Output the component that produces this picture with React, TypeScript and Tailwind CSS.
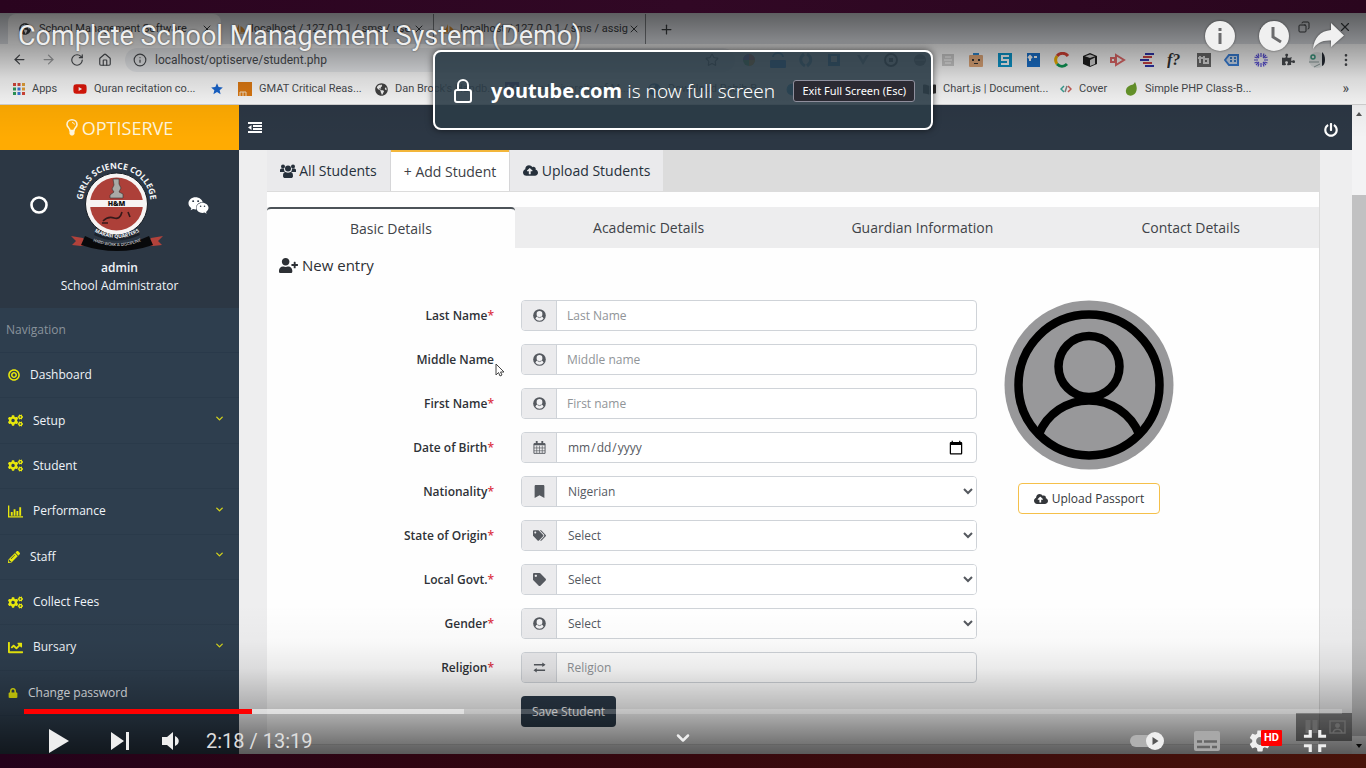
import React from "react";
import {
  FaBookmark,
  FaBookOpen,
  FaBullseye,
  FaChartLine,
  FaCloudUploadAlt,
  FaCogs,
  FaGlobeAmericas,
  FaLock,
  FaPencilAlt,
  FaPowerOff,
  FaPuzzlePiece,
  FaTag,
  FaTags,
  FaUserPlus,
  FaWeixin,
  FaYoutube,
} from "react-icons/fa";
import { MdFullscreenExit, MdSettings, MdStar } from "react-icons/md";
import {
  ArrowLeft,
  ArrowRight,
  ChevronDown,
  Circle,
  Copy,
  EllipsisVertical,
  House,
  Info,
  Minus,
  Plus,
  RotateCw,
  Star,
  X,
} from "lucide-react";

const browserFont = "font-[Roboto,'Open_Sans',sans-serif]";
const pageFont = "font-['Open_Sans','Noto_Sans',sans-serif]";

/* ---------- Browser chrome ---------- */

function Sails() {
  return (
    <svg viewBox="0 0 14 12" className="h-3 w-3.5 shrink-0" aria-hidden="true">
      <path d="M6 1v8H1C3 7 5 4 6 1zM7.500 3c2 1 4 3 5 6h-5z" fill="#d99032" />
      <path d="M1 10h12" stroke="#c98a35" />
    </svg>
  );
}

function TabStrip() {
  return (
    <div className="flex h-[31px] shrink-0 items-end bg-[#dee1e6] pl-2 text-[11px] text-[#3c4043]">
      <div className="flex h-[30px] w-[213px] items-center rounded-t-lg bg-white pl-[11px] pr-2">
        <FaGlobeAmericas className="mr-2 size-3 shrink-0" />
        <span className="flex-1 whitespace-nowrap">School Management Software</span>
        <button aria-label="Close tab"><X size={12} /></button>
      </div>
      <div className="flex h-[30px] w-[213px] items-center border-r border-[#7d8084] pl-3 pr-2">
        <Sails />
        <span className="ml-1 flex-1 whitespace-nowrap">localhost / 127.0.0.1 / sms / use</span>
        <button aria-label="Close tab"><X size={12} /></button>
      </div>
      <div className="flex h-[30px] w-[212px] items-center border-r border-[#7d8084] pl-2 pr-2">
        <Sails />
        <span className="ml-1 flex-1 whitespace-nowrap">localhost / 127.0.0.1 / sms / assig</span>
        <button aria-label="Close tab"><X size={12} /></button>
      </div>
      <button aria-label="New tab" className="flex h-[30px] w-10 items-center justify-center"><Plus size={15} /></button>
      <div className="ml-auto flex h-[30px] items-center gap-7 pr-3.5">
        <button aria-label="Minimize"><Minus size={12} /></button>
        <button aria-label="Restore" className="pb-1"><Copy size={12} className="-scale-x-100" /></button>
        <button aria-label="Close window" className="pb-1"><X size={14} /></button>
      </div>
    </div>
  );
}

const extensions: [string, React.ReactNode][] = [
  ["Palette", <><circle cx="8" cy="8" r="6" fill="#4caf50" /><path d="M8 8V2a6 6 0 0 1 6 6z" fill="#f44336" /><path d="M8 8h6a6 6 0 0 1-6 6z" fill="#ff9800" /><path d="M8 8H2a6 6 0 0 1 6-6z" fill="#7b52c9" /></>],
  ["New items", <><path d="M3 5a5 4 0 0 1 10 0" fill="none" stroke="#2a86c8" strokeWidth="2" /><rect x="0" y="8" width="16" height="8" rx="1" fill="#0878f0" /></>],
  ["Swirl", <path d="M6 2C1 6 2 11 7 14M9 2c5 3 5 8 0 12" fill="none" stroke="#4a92b8" strokeWidth="3" />],
  ["Reader", <><rect x="2" y="2" width="12" height="12" fill="#1976c2" /><path d="M5 4h6v6H5z" fill="#fff" /></>],
  ["Vue", <path d="M2 3h3l3 5 3-5h3L8 13z" fill="#7b97a8" />],
  ["Recorder", <><circle cx="8" cy="8" r="6" fill="none" stroke="#333" strokeWidth="2" /><rect x="6" y="6" width="4" height="4" fill="#333" /></>],
  ["Mask", <><circle cx="8" cy="8" r="6" fill="#777" /><path d="M3 8h10" stroke="#ddd" /></>],
  ["Snapshot", <><rect x="2" y="2" width="12" height="12" fill="#cfcfcf" /><path d="M5 5h6M4 8h8M5 11h6" stroke="#e6e6e6" strokeWidth="2" /></>],
  ["Robot", <><path d="M5 1h6v4H5z" fill="#2f8bd6" /><rect x="1" y="3" width="14" height="12" rx="1" fill="#e3aa7b" /><path d="M4 7h2v2H4zM10 7h2v2h-2zM6 11h4v1H6z" fill="#333" /></>],
  ["Stylish", <><rect x="1" y="1" width="14" height="14" fill="#0d9bd1" /><path d="M12 4H5v4h6v4H4" fill="none" stroke="#fff" strokeWidth="2" /></>],
  ["Counter", <><rect x="2" y="1" width="13" height="14" fill="#1a73d0" /><path d="M5 9V4M3 6l2-2 2 2M9 5h3" fill="none" stroke="#fff" strokeWidth="2" /></>],
  ["Colour ring", <><path d="M14 4A7 7 0 0 0 3 4" fill="none" stroke="#db4437" strokeWidth="3" /><path d="M3 4a7 7 0 0 0 0 8" fill="none" stroke="#f4b400" strokeWidth="3" /><path d="M3 12c3 3 7 3 10 0" fill="none" stroke="#0f9d58" strokeWidth="3" /></>],
  ["Cube", <><path d="M8 1l7 3v8l-7 3-7-3V4z" fill="#1f1f1f" /><path d="M8 8v6l5-2V5.500zM3 4.200L8 6l5-1.800L8 2.500z" fill="#d6d6d6" /></>],
  ["Play tag", <path d="M1 6h4v4H1zM6 3l8 5-8 5z" fill="none" stroke="#e46a6a" strokeWidth="2" />],
  ["Lines", <><path d="M6 2h9M1 8h9M6 14h9" stroke="#3036b0" strokeWidth="2" /><path d="M4 5h9M4 11h9" stroke="#d04545" strokeWidth="2" /></>],
  ["What font", <text x="0" y="13" fontFamily="Liberation Serif" fontStyle="italic" fontWeight="700" fontSize="16" fill="#333">f?</text>],
  ["Tag badge", <><rect x="1" y="1" width="14" height="14" fill="#6c6c6c" /><path d="M4 4v7M2 6h5M8 4v7h4V7H8" fill="none" stroke="#ddd" strokeWidth="2" /></>],
  ["Label", <><path d="M5 3h9v10H5L1 8z" fill="#cfe0f5" stroke="#3b82dd" strokeWidth="2" /><path d="M6 6h2M6 9h2M10 6h2M10 9h2" stroke="#3b7fcb" strokeWidth="2" /></>],
  ["Burst", <path d="M8 1v4M8 11v4M1 8h4M11 8h4M3 3l3 3M10 10l3 3M13 3l-3 3M6 10l-3 3M5 1.500l1 3M11 1.500l-1 3M5 14.500l1-3M11 14.500l-1-3M1.500 5l3 1M1.500 11l3-1M14.500 5l-3 1M14.500 11l-3-1" stroke="#5a50d8" strokeWidth="1.200" />],
];

function AddressBar() {
  return (
    <div className="flex h-[31px] shrink-0 items-center bg-[#fdfdfd] pr-1.5 text-[#4a4d51]">
      <div className="flex w-[125px] shrink-0 items-center gap-3.5 pl-3">
        <button aria-label="Back"><ArrowLeft size={15} /></button>
        <button aria-label="Forward" className="opacity-50"><ArrowRight size={15} /></button>
        <button aria-label="Reload"><RotateCw size={14} /></button>
        <button aria-label="Home"><House size={14} /></button>
      </div>
      <div className="flex h-6 flex-1 items-center rounded-full bg-[#eceef1] pl-2">
        <Info size={14} className="shrink-0" />
        <input aria-label="Address" defaultValue="localhost/optiserve/student.php" className="ml-2 min-w-0 flex-1 bg-transparent text-xs outline-none" />
        <Star size={14} className="mr-4" />
      </div>
      <div className="flex w-[625px] shrink-0 items-center">
        {extensions.map(([name, art]) => (
          <button key={name} aria-label={name} className="flex flex-1 justify-center">
            <svg viewBox="0 0 16 16" className="size-4">{art}</svg>
          </button>
        ))}
        <button aria-label="Extensions" className="flex flex-1 justify-center"><FaPuzzlePiece size={13} /></button>
        <button aria-label="Profile" className="flex flex-1 justify-center">
          <svg viewBox="0 0 20 18" className="h-[18px] w-5">
            <circle cx="10" cy="9" r="8" fill="#e4e8e8" />
            <circle cx="6" cy="6" r="2" fill="none" stroke="#3a9a80" strokeWidth="1.500" />
            <path d="M15 1c4 3 4 13 0 14z" fill="#252a33" />
            <path d="M2 11h10M7 16l6-3" stroke="#8a9a9a" />
          </svg>
        </button>
        <button aria-label="Menu" className="flex flex-1 justify-center"><EllipsisVertical size={16} /></button>
      </div>
    </div>
  );
}

const appColors = ["#d9483b", "#d9483b", "#e8a33a", "#2e9e5a", "#3b78d8", "#e8a33a", "#2e9e5a", "#3b78d8", "#d9483b"];

const bookmarks: { label: string; width: string; icon: React.ReactNode }[] = [
  {
    label: "Apps",
    width: "w-[60px]",
    icon: (
      <svg viewBox="0 0 12 12" className="size-3">
        {appColors.map((c, i) => <rect key={i} x={(i % 3) * 4.500} y={Math.floor(i / 3) * 4.500} width="3" height="3" fill={c} />)}
      </svg>
    ),
  },
  { label: "Quran recitation co...", width: "w-[137px]", icon: <FaYoutube size={14} color="#e3170a" /> },
  { label: "", width: "w-[28px]", icon: <MdStar size={14} color="#1967d2" /> },
  {
    label: "GMAT Critical Reas...",
    width: "w-[137px]",
    icon: (
      <svg viewBox="0 0 14 14" className="size-3.5">
        <rect width="14" height="14" fill="#e07b13" />
        <path d="M2 14v-4h3v4M5 10h3v4" fill="none" stroke="#f8e3c5" />
      </svg>
    ),
  },
  { label: "Dan Brock's Handb...", width: "w-[130px]", icon: <FaGlobeAmericas size={13} color="#444" /> },
  { label: "The University of M...", width: "w-[143px]", icon: <svg viewBox="0 0 14 14" className="size-3.5"><rect width="14" height="14" fill="#4b2f91" /><path d="M3 3l4 7 4-7" stroke="#fff" strokeWidth="2" fill="none" /></svg> },
  { label: "Download Rabib B...", width: "w-[138px]", icon: <FaGlobeAmericas size={13} color="#1c5d99" /> },
  { label: "", width: "w-[137px]", icon: <Circle size={13} fill="#1f8bc0" color="#1f8bc0" /> },
  { label: "Chart.js | Document...", width: "w-[137px]", icon: <FaBookOpen size={13} color="#333" /> },
  { label: "Cover", width: "w-[64px]", icon: <svg viewBox="0 0 12 12" className="size-3" fill="none" strokeWidth="1.500"><path d="M4 3L1 6l3 3" stroke="#3aa79a" /><path d="M7 3L5 9" stroke="#888" /><path d="M8 3l3 3-3 3" stroke="#d0605a" /></svg> },
  { label: "Simple PHP Class-B...", width: "w-[137px]", icon: <svg viewBox="0 0 14 14" className="size-3.5"><path d="M11 0c3 6 2 11-2 13-4 2-8-1-7-5 .5-3 3-4 5-5 2 0 3-1 4-3z" fill="#6d9f2d" /></svg> },
];

function BookmarkBar() {
  return (
    <div className="flex h-[30px] shrink-0 items-center border-b border-[#d5d5d5] bg-[#fdfdfd] pb-px pl-[13px] text-[11px] text-[#4a4d51]">
      {bookmarks.map((b, i) => (
        <a key={i} href="#" aria-label={b.label || "Bookmark"} className={`flex shrink-0 items-center gap-[7px] whitespace-nowrap ${b.width}`}>
          {b.icon}
          {b.label}
        </a>
      ))}
      <button aria-label="More bookmarks" className="ml-auto pb-0.5 pr-[17px] text-sm">»</button>
    </div>
  );
}

/* ---------- School portal ---------- */

function SchoolCrest() {
  return (
    <svg viewBox="0 0 94 94" className="h-[94px] w-[94px]" role="img" aria-label="Girls Science College crest">
      <defs>
        <path id="crest-top" d="M13.500 53a34 34 0 1 1 66 0" />
        <path id="crest-mid" d="M25 74q22 12 44 0" />
        <path id="crest-low" d="M20 82q27 12 54 0" />
      </defs>
      <circle cx="46.500" cy="46" r="31" fill="#f7f4f3" />
      <circle cx="46.500" cy="46" r="31" fill="none" stroke="#171d24" />
      <circle cx="46.500" cy="46" r="26.500" fill="#ad4039" />
      <path d="M20 42h53v7H20z" fill="#f7f4f3" />
      <path d="M43 21h6v5l2 4-2 4 4 2v4H40v-3l4-3-2-3 2-4z" fill="#a9aaa6" stroke="#333" strokeWidth=".6" />
      <path d="M33 63q5-5 11-3t8-6M32 65h6M58 54l2 5" fill="none" stroke="#35191a" strokeWidth="1.600" />
      <text x="46.500" y="48" textAnchor="middle" fontSize="7" fontWeight="900" fontFamily="Open Sans" fill="#111">H&amp;M</text>
      <path d="M1 78l12 2 6 7-8 1-9-1 4-4z" fill="#b2423b" />
      <path d="M93 78l-12 2-6 7 8 1 9-1-4-4z" fill="#b2423b" />
      <path d="M15 78q31 16 64 0l4 9q-36 12-72 0z" fill="#08090b" />
      <path d="M26 73q21 10 42 0l2 4q-24 11-46 0z" fill="#1b222b" />
      <g fontFamily="Open Sans" fill="#f4f6f8" textAnchor="middle">
        <text fontSize="8.500" fontWeight="700"><textPath href="#crest-top" startOffset="50%">GIRLS SCIENCE COLLEGE</textPath></text>
        <text fontSize="5" fontWeight="700"><textPath href="#crest-mid" startOffset="50%">MAKASI QUARTERS</textPath></text>
        <text fontSize="4"><textPath href="#crest-low" startOffset="50%">HARD WORK &amp; DISCIPLINE</textPath></text>
      </g>
    </svg>
  );
}

function Bars({ size }: { size: number }) {
  return (
    <svg viewBox="0 0 16 13" width={size} height={size} fill="none" stroke="currentColor" aria-hidden="true">
      <path d="M.7 0v12.200H16" strokeWidth="1.400" />
      <path d="M4 7v4M7 4v7M10 6v5M13 2v9" strokeWidth="2" />
    </svg>
  );
}

const navItems = [
  { label: "Dashboard", Icon: FaBullseye, open: false, size: 12 },
  { label: "Setup", Icon: FaCogs, open: true, size: 15 },
  { label: "Student", Icon: FaCogs, open: false, size: 15 },
  { label: "Performance", Icon: Bars, open: true, size: 15 },
  { label: "Staff", Icon: FaPencilAlt, open: true, size: 12 },
  { label: "Collect Fees", Icon: FaCogs, open: false, size: 15 },
  { label: "Bursary", Icon: FaChartLine, open: true, size: 15 },
  { label: "Change password", Icon: FaLock, open: false, size: 10 },
];

function Sidebar() {
  return (
    <aside className="w-[239px] shrink-0 overflow-hidden bg-[#2e3e4e] text-xs font-medium text-[#f0f4f9]">
      <div className="h-[158px] bg-[#2c3744] pt-2">
        <div className="flex items-center justify-between pl-[30px] pr-[30px]">
          <Circle size={18} strokeWidth={3.500} className="text-white" />
          <div className="pr-[3px]"><SchoolCrest /></div>
          <FaWeixin size={21} className="text-white" />
        </div>
        <div className="pt-[7px] text-center leading-[18px]">
          <p className="font-semibold">admin</p>
          <p>School Administrator</p>
        </div>
      </div>
      <p className="flex h-[45px] items-center border-b border-[#29394a] pl-1.5 text-[#8a939c]">Navigation</p>
      <nav className="grid h-[363px] grid-rows-8">
        {navItems.map(({ label, Icon, open, size }) => (
          <a key={label} href="#" className="flex items-center border-b border-[#2a3a4a] pl-2 pr-3.5">
            <span className="text-[#e8e80c]"><Icon size={size} /></span>
            <span className="ml-2.5 flex-1">{label}</span>
            {open && <ChevronDown size={11} strokeWidth={3} className="mb-1 text-[#d2d21c]" />}
          </a>
        ))}
      </nav>
    </aside>
  );
}

function SwapArrows({ size }: { size: number }) {
  return (
    <svg viewBox="0 0 14 12" width={size} height={size} fill="none" stroke="currentColor" strokeWidth="1.500" aria-hidden="true">
      <path d="M1 3h11M3 9h10" />
      <path d="M10 .5L13.500 3 10 5.500zM4 6.500L.5 9 4 11.500z" fill="currentColor" stroke="none" />
    </svg>
  );
}

function Person({ size }: { size: number }) {
  return (
    <svg viewBox="0 0 14 14" width={size} height={size} aria-hidden="true">
      <circle cx="7" cy="7" r="6.800" fill="currentColor" />
      <path d="M2.600 10.600C3.200 8.800 4.200 8.300 5 8.200 4 7.400 3.900 6.200 3.900 5.300a3.100 3.100 0 0 1 6.200 0c0 .9-.1 2.100-1.100 2.900.8.100 1.800.6 2.400 2.400a5.700 5.700 0 0 1-8.800 0z" fill="#f1f1f3" />
      <path d="M5 8.600q2 1.300 4 0" stroke="currentColor" strokeWidth=".8" fill="none" />
    </svg>
  );
}

function MonthGrid({ size }: { size: number }) {
  return (
    <svg viewBox="0 0 14 14" width={size} height={size} fill="none" stroke="currentColor" aria-hidden="true">
      <path d="M1 3h12v10.300H1z" />
      <path d="M1 3.500h12" strokeWidth="2" />
      <path d="M4 0v4M10 0v4" strokeWidth="2" />
      <path d="M4 5v8M7 5v8M10 5v8M1 7.500h12M1 10.500h12" strokeWidth=".7" />
    </svg>
  );
}

function Group() {
  return (
    <svg viewBox="0 0 16 14" className="h-3.5 w-4" fill="currentColor" aria-hidden="true">
      <circle cx="3" cy="2.500" r="2" />
      <circle cx="13" cy="2.500" r="2" />
      <circle cx="8" cy="4.500" r="3" />
      <path d="M0 8V6c0-1 1-1.500 2-1.500h2C4 6 4.300 7 5 8zM16 8V6c0-1-1-1.500-2-1.500h-2C12 6 11.700 7 11 8zM3 12c0-3 1-4 2.500-4 1.500 1 3.500 1 5 0C12 8 13 9 13 12c0 1.500-1 2-2 2H5c-1 0-2-.5-2-2z" />
    </svg>
  );
}

type Field = {
  id: string;
  label: string;
  required: boolean;
  kind: "text" | "date" | "select";
  value: string;
  Icon: React.ComponentType<{ size: number }>;
};

const fields: Field[] = [
  { id: "last", label: "Last Name", required: true, kind: "text", value: "Last Name", Icon: Person },
  { id: "middle", label: "Middle Name", required: false, kind: "text", value: "Middle name", Icon: Person },
  { id: "first", label: "First Name", required: true, kind: "text", value: "First name", Icon: Person },
  { id: "dob", label: "Date of Birth", required: true, kind: "date", value: "", Icon: MonthGrid },
  { id: "nationality", label: "Nationality", required: true, kind: "select", value: "Nigerian", Icon: FaBookmark },
  { id: "state", label: "State of Origin", required: true, kind: "select", value: "Select", Icon: FaTags },
  { id: "lga", label: "Local Govt.", required: true, kind: "select", value: "Select", Icon: FaTag },
  { id: "gender", label: "Gender", required: true, kind: "select", value: "Select", Icon: Person },
  { id: "religion", label: "Religion", required: true, kind: "text", value: "Religion", Icon: SwapArrows },
];

function FieldRow({ id, label, required, kind, value, Icon }: Field) {
  return (
    <>
      <label htmlFor={id} className="text-right text-xs font-semibold leading-[31px] text-[#2f3237]">
        {label}
        {required && <span className="text-[#dc3545]">*</span>}
      </label>
      <div className="flex h-[31px] overflow-hidden rounded border border-[#cfd3d8] bg-white text-xs text-[#55595f]">
        <span className="flex w-[35px] shrink-0 items-center justify-center border-r border-[#cfd3d8] bg-[#ebebed]">
          <Icon size={13} />
        </span>
        {kind === "select" ? (
          <select id={id} className="min-w-0 flex-1 bg-white pl-[7px] font-medium outline-none">
            <option>{value}</option>
          </select>
        ) : kind === "date" ? (
          <input id={id} type="date" className="min-w-0 flex-1 pl-2.5 pr-3 font-medium outline-none [&::-webkit-calendar-picker-indicator]:size-4 [&::-webkit-calendar-picker-indicator]:p-0" />
        ) : (
          <input id={id} type="text" placeholder={value} className="min-w-0 flex-1 px-2.5 outline-none placeholder:text-[#909498]" />
        )}
      </div>
    </>
  );
}

function Avatar() {
  return (
    <svg viewBox="0 0 170 170" className="size-[170px]" role="img" aria-label="Passport photograph">
      <circle cx="85" cy="85" r="84.500" fill="#98989a" />
      <g fill="none" stroke="#000" strokeWidth="8.500">
        <circle cx="85" cy="85" r="70.500" />
        <circle cx="85" cy="66.500" r="30.500" />
        <path d="M35 134a54 54 0 0 1 100 0" />
      </g>
    </svg>
  );
}

function StudentForm() {
  return (
    <form onSubmit={(e) => e.preventDefault()} className="mt-[34px] grid grid-cols-[227fr_456fr_315fr] gap-x-[27px]">
      <div className="col-span-2 grid grid-cols-[227fr_456fr] gap-x-[27px] gap-y-[13px]">
        {fields.map((f) => <FieldRow key={f.id} {...f} />)}
        <div className="col-start-2">
          <button type="submit" className="h-[31px] rounded bg-[#2c3b4a] px-[11px] text-xs font-medium text-white">Save Student</button>
        </div>
      </div>
      <div className="flex flex-col items-start">
        <div className="flex flex-col items-center">
          <Avatar />
          <button type="button" className="mt-[13px] flex h-[31px] items-center gap-1 rounded border border-[#f5c04a] bg-white px-[15px] text-xs font-medium text-[#34373b]">
            <FaCloudUploadAlt size={14} />
            Upload Passport
          </button>
        </div>
      </div>
    </form>
  );
}

function Portal() {
  return (
    <div className={`flex min-h-0 flex-1 ${pageFont}`}>
      <div className="flex min-w-0 flex-1 flex-col">
        <header className="flex h-[45px] shrink-0">
          <div className="flex w-[239px] shrink-0 items-center justify-center gap-1 bg-[#ffab02] text-lg font-medium text-[#fff6dd]">
            <svg viewBox="0 0 12 17" className="h-[17px] w-3" fill="none" stroke="currentColor" aria-hidden="true">
              <path d="M4 11.500C4 9 1 8.500 1 5.500a5 4.700 0 0 1 10 0c0 3-3 3.500-3 6z" strokeWidth="1.600" />
              <path d="M6 3.500q2 0 2.500 2" />
              <path d="M3.500 11.500h5V15L7 16.500H5L3.500 15z" fill="currentColor" stroke="none" />
            </svg>
            OPTISERVE
          </div>
          <div className="flex flex-1 items-center justify-between bg-[#2c3744] pl-[9px] pr-3.5 text-white">
            <button aria-label="Toggle sidebar">
              <svg viewBox="0 0 14 11" className="h-[11px] w-3.5" fill="none" stroke="currentColor">
                <path d="M0 1h14M5 4h9M5 7h9M0 10h14" strokeWidth="2" />
                <path d="M3.500 3v5L0 5.500z" fill="currentColor" stroke="none" />
              </svg>
            </button>
            <button aria-label="Log out" className="pt-1"><FaPowerOff size={14} /></button>
          </div>
        </header>
        <div className="flex min-h-0 flex-1">
          <Sidebar />
          <main className="flex min-w-0 flex-1 flex-col bg-[#eeeeef] pb-[9px] pl-7 pr-8">
            <div role="tablist" className="flex h-[41px] shrink-0 bg-[#dcdcdc] text-sm text-[#3d4045]">
              <button role="tab" aria-selected="false" className="flex w-[124px] items-center justify-center gap-[3px] border-r border-[#d6d6d8] bg-[#eaeaec] text-[#26303b]">
                <Group /> All Students
              </button>
              <button role="tab" aria-selected="true" className="w-[118px] border-t-2 border-[#f3b63a] bg-white">+ Add Student</button>
              <button role="tab" aria-selected="false" className="flex w-[154px] items-center justify-center gap-1 border-l border-[#d6d6d8] bg-[#eaeaec] text-[#26303b]">
                <FaCloudUploadAlt size={15} /> Upload Students
              </button>
            </div>
            <section className="min-h-0 flex-1 border-b border-r border-t border-[#dcdcdc] bg-[#fefefe] pt-[15px]">
              <div role="tablist" className="flex h-[41px] bg-[#ededee] text-sm text-[#3f4348]">
                <button role="tab" aria-selected="true" className="grow-[248] basis-0 rounded-t border-t-2 border-[#4c5358] bg-[#fefefe]">Basic Details</button>
                <button role="tab" aria-selected="false" className="grow-[268] basis-0">Academic Details</button>
                <button role="tab" aria-selected="false" className="grow-[280] basis-0">Guardian Information</button>
                <button role="tab" aria-selected="false" className="grow-[257] basis-0">Contact Details</button>
              </div>
              <h1 className="flex h-[18px] items-center gap-1 pl-3 pt-4 text-[15px] leading-none text-[#2d3035]">
                <FaUserPlus size={19} /> New entry
              </h1>
              <StudentForm />
            </section>
          </main>
        </div>
      </div>
      <div className="flex w-3.5 shrink-0 flex-col items-center bg-[#f3f3f4] text-[#555]" aria-hidden="true">
        <svg viewBox="0 0 14 18" className="h-[18px] w-3.5"><path d="M4 11l3-4 3 4z" fill="currentColor" /></svg>
        <div className="mt-[72px] w-3.5 flex-1 bg-[#c1c1c2]" />
        <svg viewBox="0 0 14 18" className="h-[18px] w-3.5"><path d="M4 8l3 4 3-4z" fill="#111" /></svg>
      </div>
    </div>
  );
}

/* ---------- Video player overlay ---------- */

function PlayerTop() {
  return (
    <div className="pointer-events-none absolute inset-x-0 top-0 flex h-[125px] items-start justify-between bg-[linear-gradient(to_bottom,rgba(0,0,0,.58),rgba(0,0,0,.38)_25%,rgba(0,0,0,.15)_52%,rgba(0,0,0,.04)_76%,transparent)] pl-[18px] pr-[22px] text-[#eee]">
      <h2 className="font-[Roboto,sans-serif] text-[27px] leading-[46px] [text-shadow:0_0_2px_rgba(0,0,0,.6)]">Complete School Management System (Demo)</h2>
      <div className="flex items-center gap-6 pt-2 drop-shadow-[0_0_1px_rgba(0,0,0,.5)]">
        <button aria-label="Info">
          <svg viewBox="0 0 30 30" className="size-[30px]"><circle cx="15" cy="15" r="15" fill="#f0f0f0" /><path d="M13.500 7h3v3h-3zM13.500 12h3v11h-3z" fill="#6b6b6d" /></svg>
        </button>
        <button aria-label="Watch later">
          <svg viewBox="0 0 30 30" className="size-[30px]"><circle cx="15" cy="15" r="15" fill="#f0f0f0" /><path d="M14 6v10l8 5" fill="none" stroke="#6b6b6d" strokeWidth="3" /></svg>
        </button>
        <button aria-label="Share">
          <svg viewBox="0 0 31 26" className="h-[26px] w-[31px]"><path d="M18 0l13 12.500L18 24v-6.500C9 17 4 20 0 26 1 15 7 8 18 7z" fill="#f0f0f0" /></svg>
        </button>
      </div>
    </div>
  );
}

function PlayerBottom() {
  return (
    <div className="absolute inset-x-0 bottom-0 flex h-[150px] flex-col justify-end bg-[linear-gradient(to_top,rgba(0,0,0,.62),rgba(0,0,0,.36)_23%,rgba(0,0,0,.27)_31%,rgba(0,0,0,.08)_57%,rgba(0,0,0,.02)_75%,transparent)] px-6 font-[Roboto,sans-serif] text-[#eee]">
      <div className="absolute bottom-[13px] right-3.5 flex h-7 w-14 items-center justify-center bg-black/45" aria-hidden="true">
        <svg viewBox="0 0 44 20" className="h-5 w-11" fill="none" stroke="#666">
          <path d="M6 3v13M13 3v13" strokeWidth="5" />
          <path d="M28 4h15v12H28zM31 16c1-5 8-5 9 0" strokeWidth="1.500" />
          <circle cx="35.500" cy="8.500" r="2" fill="#666" />
        </svg>
      </div>
      <input
        type="range"
        aria-label="Seek"
        defaultValue={17}
        className="relative block h-[5px] w-full appearance-none bg-[linear-gradient(to_right,#f00_17.3%,rgba(255,255,255,.6)_17.3%,rgba(255,255,255,.6)_33.4%,rgba(255,255,255,.2)_33.4%)] [&::-webkit-slider-thumb]:appearance-none"
      />
      <div className="relative flex h-10 items-center justify-between pt-3.5">
        <div className="flex items-center pl-6">
          <button aria-label="Play" className="w-[62px]">
            <svg viewBox="0 0 22 24" className="h-6 w-[22px]"><path d="M1 0l20 12L1 24z" fill="#eee" /></svg>
          </button>
          <button aria-label="Next" className="w-[52px]">
            <svg viewBox="0 0 20 18" className="h-[18px] w-5"><path d="M1 0l13 9-13 9zM16 0h3v18h-3z" fill="#eee" /></svg>
          </button>
          <button aria-label="Mute" className="w-11">
            <svg viewBox="0 0 18 20" className="h-5 w-[18px]"><path d="M0 6h5l6-5v18l-6-5H0zM13 5c5 2 5 8 0 10z" fill="#eee" /></svg>
          </button>
          <span className="text-xl leading-6 text-[#ddd]">2:18 / 13:19</span>
        </div>
        <div className="flex items-center pr-2">
          <button aria-label="Autoplay" className="w-16">
            <svg viewBox="0 0 34 20" className="h-5 w-[34px]"><rect y="4" width="30" height="12" rx="6" fill="#b0b0b0" /><circle cx="25" cy="10" r="9" fill="#eee" /><path d="M22.500 6l6 4-6 4z" fill="#555" /></svg>
          </button>
          <button aria-label="Subtitles" className="w-[53px]">
            <svg viewBox="0 0 26 20" className="h-5 w-[26px]"><rect width="26" height="20" rx="2" fill="#a8a8a8" /><path d="M3 10.500h5M10 10.500h13M3 16h13M18 16h5" stroke="#666" strokeWidth="2.500" /></svg>
          </button>
          <button aria-label="Settings" className="relative w-[49px]">
            <MdSettings size={26} />
            <span className="absolute left-3.5 top-0.5 h-4 w-[21px] rounded-[1px] bg-[#f00] text-center text-[11px] font-bold leading-4 text-white">HD</span>
          </button>
          <button aria-label="Exit full screen"><MdFullscreenExit size={38} /></button>
        </div>
        <button aria-label="More videos" className="absolute left-1/2 top-3.5 -translate-x-1/2"><ChevronDown size={20} strokeWidth={3} /></button>
      </div>
    </div>
  );
}

function FullScreenNotice() {
  return (
    <div className="absolute left-1/2 top-[50px] flex h-20 w-[500px] -translate-x-1/2 items-center whitespace-nowrap rounded-lg border-2 border-white bg-[#2b3c47]/90 pl-[18px] pr-4 pt-0.5 font-['Noto_Sans',sans-serif] text-xl text-white shadow-[0_0_7px_rgba(0,0,0,.6)]">
      <svg viewBox="0 0 20 26" className="mr-[18px] h-[26px] w-5" fill="none" stroke="#fff" strokeWidth="2" aria-hidden="true">
        <rect x="2" y="12" width="16" height="12" rx="2" />
        <path d="M5 12V7a5 5 0 0 1 10 0v5" />
      </svg>
      <p><strong>youtube.com</strong> <span className="text-[19px] font-light">is now full screen</span></p>
      <button className="ml-auto h-[22px] rounded-[3px] border border-[#8f8f9d] bg-[#2b2a33] px-2 text-[11px]">Exit Full Screen (Esc)</button>
    </div>
  );
}

export default function App() {
  return (
    <div className="relative flex h-screen flex-col overflow-hidden">
      <div className="h-[13px] shrink-0 bg-[linear-gradient(to_right,#2a041f,#310825_50%,#2a061e)]" />
      <div className={`relative flex min-h-0 flex-1 flex-col overflow-hidden ${browserFont}`}>
        <TabStrip />
        <AddressBar />
        <BookmarkBar />
        <Portal />
        <PlayerTop />
        <PlayerBottom />
        <svg viewBox="0 0 10 14" className="absolute left-[495px] top-[350px] h-3.5 w-2.5" aria-hidden="true">
          <path d="M1 1v11l2.500-2.500L5 13l2-1-1.500-3H9z" fill="#fff" stroke="#444" />
        </svg>
      </div>
      <div className="h-3.5 shrink-0 bg-[linear-gradient(to_right,#24021b,#32060f_40%,#48130a)]" />
      <FullScreenNotice />
    </div>
  );
}
